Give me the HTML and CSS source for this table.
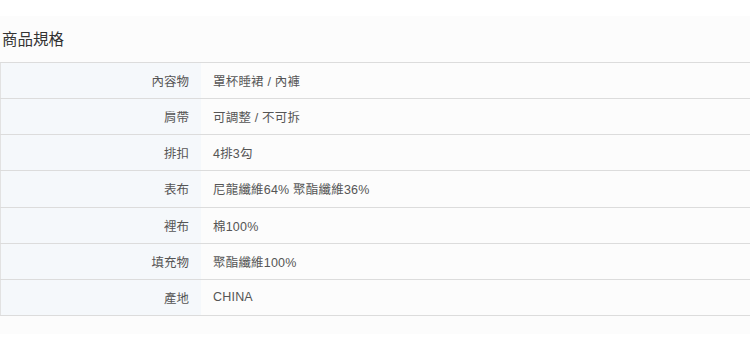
FILE: index.html
```html
<!DOCTYPE html>
<html lang="zh-Hant">
<head>
<meta charset="utf-8">
<link rel="stylesheet" href="styles.css">
</head>
<body>
<section class="spec">
  <h2 class="spec-title">商品規格</h2>
  <table class="spec-table">
    <tr><th>內容物</th><td>罩杯睡裙 / 內褲</td></tr>
    <tr><th>肩帶</th><td>可調整 / 不可拆</td></tr>
    <tr><th>排扣</th><td>4排3勾</td></tr>
    <tr><th>表布</th><td>尼龍纖維64% 聚酯纖維36%</td></tr>
    <tr><th>裡布</th><td>棉100%</td></tr>
    <tr><th>填充物</th><td>聚酯纖維100%</td></tr>
    <tr><th>產地</th><td>CHINA</td></tr>
  </table>
</section>
</body>
</html>
```

FILE: styles.css
```css
html, body {
  margin: 0;
  padding: 0;
  background: #ffffff;
}
body {
  font-family: "Noto Sans CJK TC", "Liberation Sans", sans-serif;
  color: #555;
}
.spec {
  margin-top: 16px;
  background: #fcfcfc;
  padding: 8px 0 18px 0;
}
.spec-title {
  margin: 0 0 0 2px;
  font-size: 15.5px;
  font-weight: normal;
  color: #333;
  line-height: 28px;
  height: 38px;
}
.spec-table {
  width: 760px;
  border-collapse: collapse;
  border-left: 1px solid #e2e2e2;
  font-size: 12.5px;
}
.spec-table tr {
  height: 36.15px;
  border-top: 1px solid #dcdcdc;
  border-bottom: 1px solid #dcdcdc;
}
.spec-table th {
  width: 188px;
  padding: 0 12px 0 0;
  text-align: right;
  font-weight: normal;
  background: #f5f8fb;
  color: #555;
}
.spec-table td {
  padding: 0 0 0 12px;
  background: #fcfcfc;
  font-family: "Liberation Sans", "Noto Sans CJK TC", sans-serif;
  letter-spacing: 0.2px;
}
```
